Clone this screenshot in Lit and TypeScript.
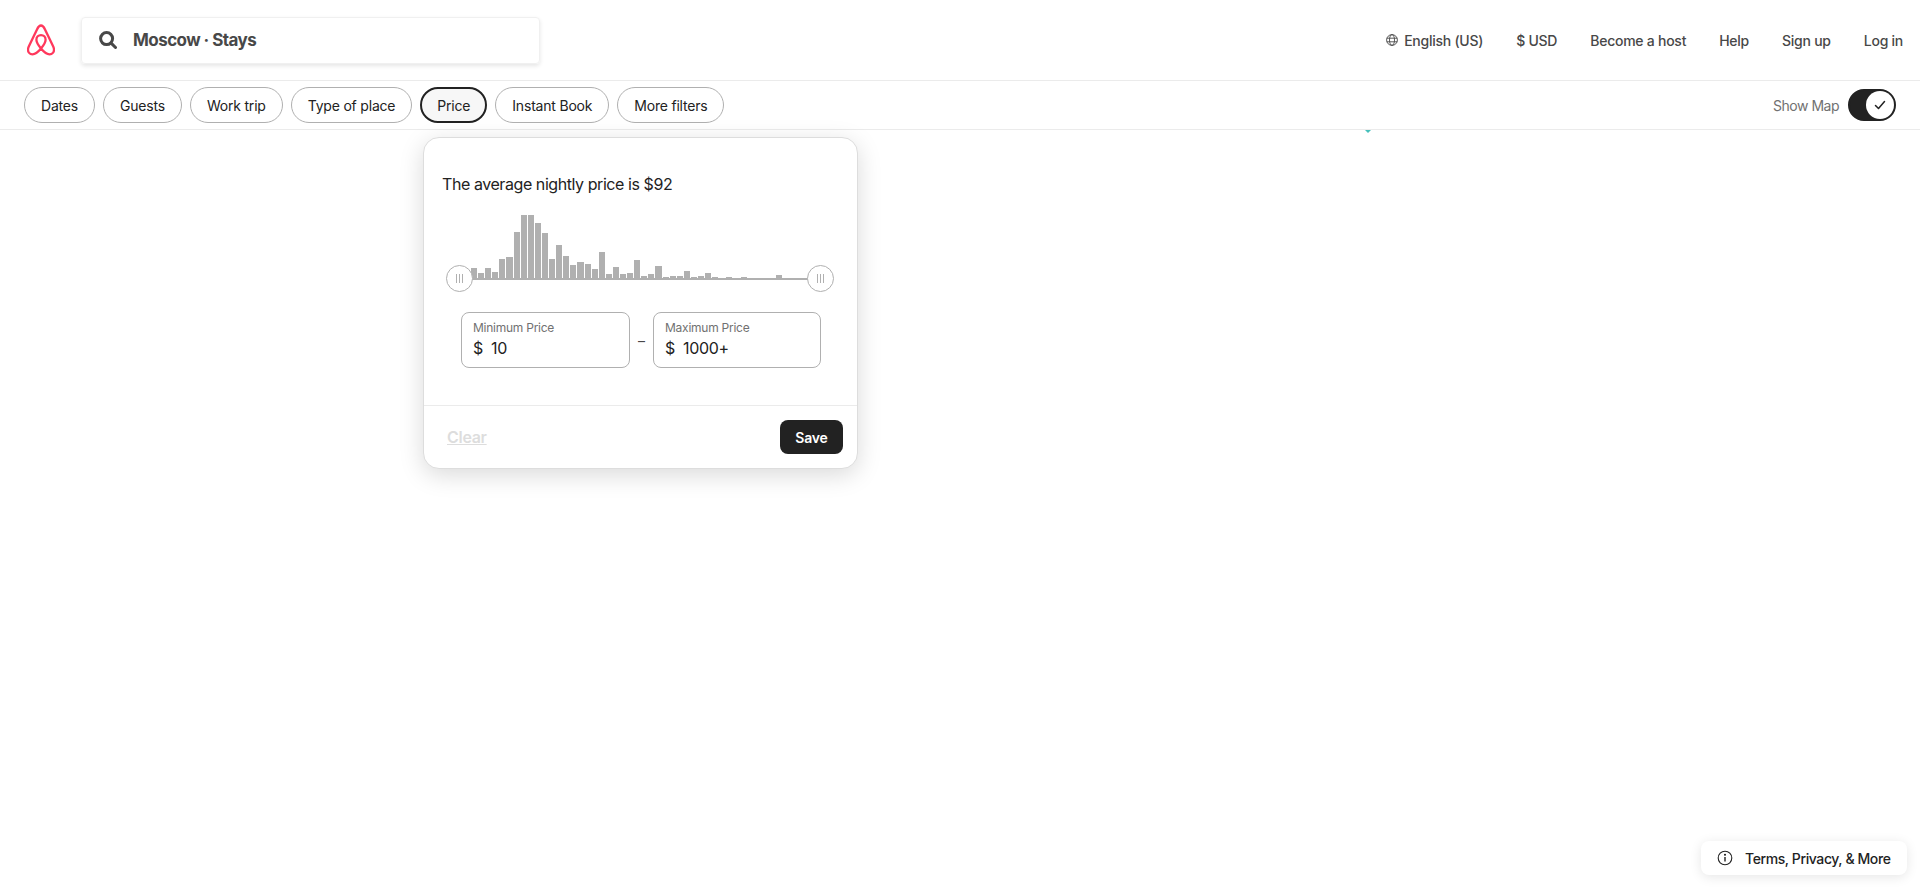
import { LitElement, css, html, svg } from "lit";
import { customElement } from "lit/decorators.js";

// price histogram, heights in px from the zoomed reference
const BARS = [
  11, 6, 11, 7, 20, 22, 47, 64, 64, 56, 46, 20, 34, 23, 14, 17, 15, 10, 27, 5, 12, 5, 6, 19,
  3, 5, 13, 2, 3, 3, 8, 2, 3, 6, 2, 0, 2, 0, 2, 0, 0, 0, 0, 4, 0, 0, 0, 0,
];
const FILTERS = ["Dates", "Guests", "Work trip", "Type of place", "Price", "Instant Book", "More filters"];

const logo = svg`<svg class="logo" viewBox="0 0 28 32" fill="none" stroke="#ff385c" stroke-width="2.3" stroke-linejoin="round" stroke-linecap="round">
  <path d="M14 24.5c-2.6-3.2-4.6-6.2-4.6-8.8 0-2.7 2-4.5 4.6-4.5s4.6 1.800 4.600 4.500c0 2.600-2 5.600-4.600 8.800zm0 0c-3 3.600-5.600 5.800-8.500 5.800-3 0-4.500-2.300-4.500-4.600 0-1.200.3-2.200.9-3.500C3.700 18.500 7.600 10.500 10 5.400 11.100 3 12.200 1.500 14 1.500s2.900 1.500 4 3.900c2.400 5.100 6.300 13.100 8.100 16.800.6 1.300.9 2.300.9 3.500 0 2.300-1.500 4.600-4.500 4.600-2.900 0-5.500-2.200-8.500-5.800z"/>
</svg>`;

@customElement("app-root")
export class AppRoot extends LitElement {
  static styles = css`
    :host {
      display: block;
      position: relative;
      height: 888px;
      overflow: hidden;
      background: #fff;
      font-family: Inter, "Liberation Sans", sans-serif;
      color: #222;
    }
    .header {
      height: 80px;
      display: flex;
      align-items: center;
      padding: 0 17px 0 27px;
      border-bottom: 1px solid #ebebeb;
    }
    .logo {
      width: 28px;
      height: 32px;
      display: block;
    }
    .search {
      margin-left: 26px;
      width: 459px;
      height: 47px;
      box-sizing: border-box;
      display: flex;
      align-items: center;
      padding-left: 17px;
      gap: 16px;
      border-radius: 4px;
      border: 1px solid #f0f0f0;
      box-shadow: 0 2px 4px rgba(0, 0, 0, 0.1);
      font-size: 17px;
      font-weight: 700;
      letter-spacing: -0.55px;
      color: #484848;
    }
    .search svg {
      width: 18px;
      height: 18px;
    }
    .nav {
      margin-left: auto;
      display: flex;
      align-items: center;
      gap: 33px;
      font-size: 14px;
      font-weight: 500;
      letter-spacing: -0.25px;
      color: #484848;
    }
    .lang {
      display: flex;
      align-items: center;
      gap: 6px;
    }
    .lang svg {
      width: 12px;
      height: 12px;
    }
    .filters {
      height: 48px;
      display: flex;
      align-items: center;
      gap: 8px;
      padding: 0 24px;
      border-bottom: 1px solid #ebebeb;
    }
    .pill {
      height: 36px;
      box-sizing: border-box;
      display: flex;
      align-items: center;
      padding: 0 16px;
      border: 1px solid #b0b0b0;
      border-radius: 18px;
      font-size: 14px;
      letter-spacing: -0.2px;
      color: #222;
    }
    .pill.active {
      border: 2px solid #222;
      background: #f7f7f7;
      padding: 0 15px;
    }
    .map {
      margin-left: auto;
      display: flex;
      align-items: center;
      gap: 9px;
      font-size: 14px;
      letter-spacing: -0.5px;
      color: #717171;
    }
    .toggle {
      width: 48px;
      height: 32px;
      box-sizing: border-box;
      display: flex;
      justify-content: flex-end;
      border-radius: 16px;
      background: #222;
      border: 2px solid #222;
    }
    .toggle span {
      width: 28px;
      height: 28px;
      display: flex;
      align-items: center;
      justify-content: center;
      border-radius: 50%;
      background: #fff;
    }
    .toggle svg {
      width: 12px;
      height: 12px;
    }
    .mark {
      position: absolute;
      left: 1365px;
      top: 130px;
      width: 0;
      height: 0;
      border-left: 3px solid transparent;
      border-right: 3px solid transparent;
      border-top: 3px solid #46c0bb;
    }
    .popup {
      position: absolute;
      left: 423px;
      top: 137px;
      width: 435px;
      height: 332px;
      box-sizing: border-box;
      display: flex;
      flex-direction: column;
      background: #fff;
      border: 1px solid #ddd;
      border-radius: 16px;
      box-shadow: 0 6px 24px rgba(0, 0, 0, 0.15);
    }
    .body {
      flex: 1;
      padding: 34px 18px 0;
    }
    .avg {
      font-size: 16px;
      line-height: 24px;
      letter-spacing: -0.43px;
    }
    .chart {
      position: relative;
      margin: 17px 0 0 18px;
      width: 360px;
      height: 67px;
      padding-left: 11px;
      box-sizing: border-box;
      border-bottom: 2px solid #b0b0b0;
    }
    .bars {
      display: grid;
      grid-template-columns: repeat(48, 6.1px);
      column-gap: 1px;
      align-items: end;
      height: 66px;
    }
    .bars i {
      display: block;
      background: #b0b0b0;
    }
    .knob {
      position: absolute;
      top: 52px;
      width: 27px;
      height: 27px;
      box-sizing: border-box;
      display: flex;
      align-items: center;
      justify-content: center;
      gap: 2px;
      background: #fff;
      border: 1px solid #b0b0b0;
      border-radius: 50%;
    }
    .knob.min {
      left: -14px;
    }
    .knob.max {
      right: -14px;
    }
    .knob b {
      width: 1px;
      height: 9px;
      background: #b0b0b0;
    }
    .range {
      display: flex;
      align-items: center;
      margin: 32px 0 0 19px;
    }
    .box {
      height: 56px;
      box-sizing: border-box;
      padding: 7px 11px;
      border: 1px solid #b0b0b0;
      border-radius: 8px;
    }
    .box.low {
      width: 169px;
    }
    .box.high {
      width: 168px;
    }
    .box label {
      display: block;
      font-size: 12px;
      line-height: 16px;
      letter-spacing: -0.25px;
      color: #717171;
    }
    .box div {
      display: flex;
      gap: 8px;
      margin-top: 1px;
      font-size: 16px;
      line-height: 22px;
      letter-spacing: -0.3px;
    }
    .dash {
      width: 23px;
      text-align: center;
      font-size: 14px;
      color: #484848;
    }
    .foot {
      height: 63px;
      box-sizing: border-box;
      display: flex;
      align-items: center;
      justify-content: space-between;
      padding: 0 14px 0 23px;
      border-top: 1px solid #ebebeb;
    }
    .clear {
      font-size: 16px;
      font-weight: 600;
      letter-spacing: -0.3px;
      color: #ddd;
      text-decoration: underline;
    }
    .save {
      width: 63px;
      height: 34px;
      display: flex;
      align-items: center;
      justify-content: center;
      border-radius: 8px;
      background: #222;
      color: #fff;
      font-size: 14px;
      font-weight: 600;
      letter-spacing: -0.2px;
    }
    .terms {
      position: absolute;
      right: 13px;
      bottom: 13px;
      width: 206px;
      height: 34px;
      box-sizing: border-box;
      display: flex;
      align-items: center;
      gap: 12px;
      padding-left: 16px;
      background: #fff;
      border-radius: 8px;
      box-shadow: 0 2px 12px rgba(0, 0, 0, 0.1);
      font-size: 14px;
      font-weight: 500;
      letter-spacing: -0.4px;
    }
    .terms svg {
      width: 16px;
      height: 16px;
    }
  `;

  render() {
    return html`
      <div class="header">
        ${logo}
        <div class="search">
          <svg viewBox="0 0 18 18" fill="none" stroke="#484848" stroke-width="3" stroke-linecap="round">
            <circle cx="7.600" cy="7.600" r="6" />
            <path d="M12.400 12.400l4.100 4.100" />
          </svg>
          <span>Moscow · Stays</span>
        </div>
        <div class="nav">
          <span class="lang">
            <svg viewBox="0 0 12 12" fill="none" stroke="#484848" stroke-width="0.9">
              <circle cx="6" cy="6" r="5.400" />
              <ellipse cx="6" cy="6" rx="2.500" ry="5.400" />
              <path d="M.8 4.200h10.400M.8 7.800h10.400" />
            </svg>
            English (US)
          </span>
          <span>$ USD</span>
          <span>Become a host</span>
          <span>Help</span>
          <span>Sign up</span>
          <span>Log in</span>
        </div>
      </div>
      <div class="filters">
        ${FILTERS.map((f) => html`<div class="pill ${f === "Price" ? "active" : ""}">${f}</div>`)}
        <div class="map">
          Show Map
          <div class="toggle">
            <span>
              <svg viewBox="0 0 12 12" fill="none" stroke="#222" stroke-width="1.500" stroke-linecap="round" stroke-linejoin="round">
                <path d="M1.500 6.500l3 3 6-7" />
              </svg>
            </span>
          </div>
        </div>
      </div>
      <div class="mark"></div>
      <div class="popup">
        <div class="body">
          <div class="avg">The average nightly price is $92</div>
          <div class="chart">
            <div class="bars">${BARS.map((h) => html`<i style="height:${h}px"></i>`)}</div>
            <div class="knob min"><b></b><b></b><b></b></div>
            <div class="knob max"><b></b><b></b><b></b></div>
          </div>
          <div class="range">
            <div class="box low">
              <label>Minimum Price</label>
              <div><span>$</span><span>10</span></div>
            </div>
            <span class="dash">–</span>
            <div class="box high">
              <label>Maximum Price</label>
              <div><span>$</span><span>1000+</span></div>
            </div>
          </div>
        </div>
        <div class="foot">
          <span class="clear">Clear</span>
          <span class="save">Save</span>
        </div>
      </div>
      <div class="terms">
        <svg viewBox="0 0 16 16" fill="none" stroke="#222" stroke-width="1.100">
          <circle cx="8" cy="8" r="6.800" />
          <path d="M8 7v4.500" stroke-width="1.400" />
          <circle cx="8" cy="4.700" r=".5" fill="#222" />
        </svg>
        Terms, Privacy, &amp; More
      </div>
    `;
  }
}
